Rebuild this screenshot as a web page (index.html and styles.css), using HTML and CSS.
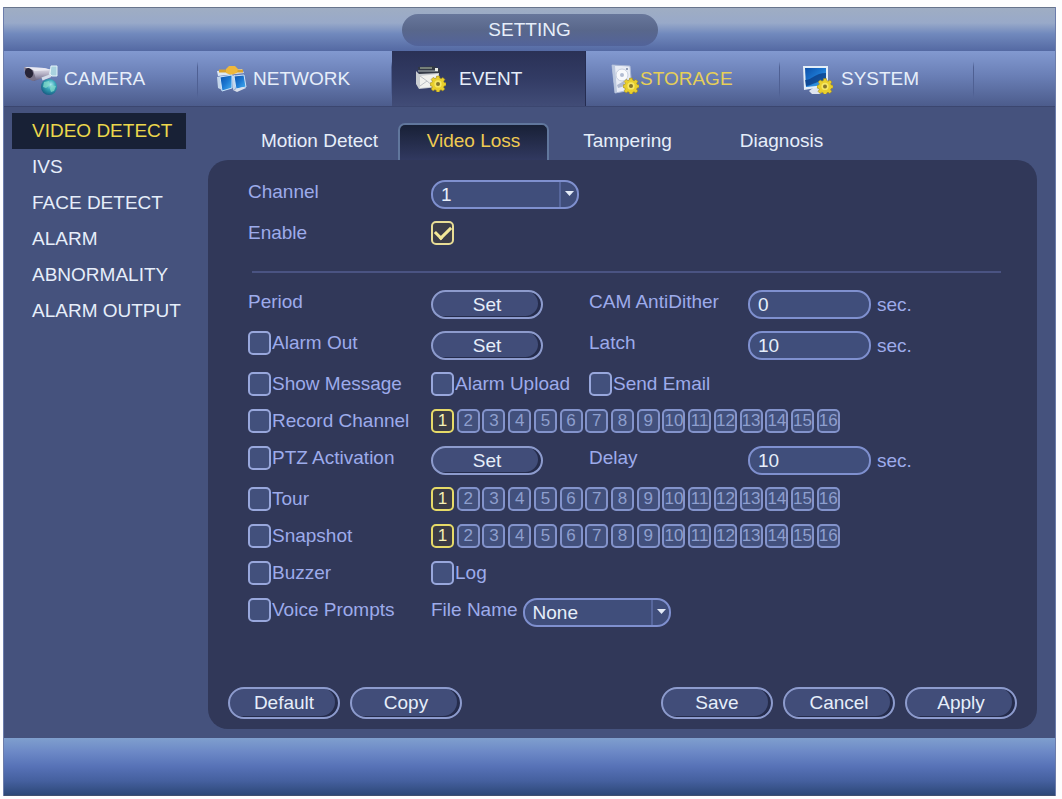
FILE: index.html
```html
<!DOCTYPE html>
<html lang="en">
<head>
<meta charset="utf-8">
<meta name="viewport" content="width=device-width, initial-scale=1">
<title>Setting - Event - Video Loss</title>
<link rel="stylesheet" href="styles.css">
</head>
<body>
<svg class="defs" width="0" height="0" aria-hidden="true">
  <defs>
    <linearGradient id="screen" x1="0" y1="0" x2="1" y2="1">
      <stop offset="0" stop-color="#0c4fa8"/><stop offset="0.5" stop-color="#1c78d2"/><stop offset="1" stop-color="#4bb4f2"/>
    </linearGradient>
    <linearGradient id="metal" x1="0" y1="0" x2="0" y2="1">
      <stop offset="0" stop-color="#efeff6"/><stop offset="0.5" stop-color="#b4b0c4"/><stop offset="1" stop-color="#625d7c"/>
    </linearGradient>
    <radialGradient id="globe" cx="0.6" cy="0.35" r="0.7">
      <stop offset="0" stop-color="#a9eaf0"/><stop offset="0.45" stop-color="#35a3b6"/><stop offset="1" stop-color="#145a80"/>
    </radialGradient>
    <symbol id="gear" viewBox="0 0 16 16">
      <path fill="#e9cf2d" stroke="#9b8420" stroke-width="0.6" d="M6.6 0.6h2.8l0.4 2 1.3 0.6 1.8-1.2 2 2-1.2 1.8 0.5 1.2 2 0.4v2.6l-2 0.5-0.6 1.2 1.2 1.8-2 2-1.8-1.2-1.2 0.6-0.4 1.8H6.6l-0.4-1.9-1.3-0.6-1.8 1.2-2-2 1.2-1.8-0.6-1.2-1.6-0.4V7.4l1.7-0.4 0.6-1.3-1.2-1.8 2-2 1.8 1.2 1.2-0.5z"/>
      <circle cx="8" cy="8.4" r="3.6" fill="#f7e865"/>
      <circle cx="8" cy="8.4" r="2" fill="#84752c"/>
    </symbol>
  </defs>
</svg>

<div class="app">
  <header class="titlebar"><h1 class="title">SETTING</h1></header>

  <nav class="mainnav" aria-label="Settings">
    <a class="navitem" href="#camera">
      <svg class="icon-camera" width="42" height="32" viewBox="0 0 42 32" aria-hidden="true">
        <path d="M2 4l20 1 8 2-3 6-15 5-8-3z" fill="url(#metal)"/>
        <path d="M2 4l20 1 8 2-17 1z" fill="#e9e9f2"/>
        <path d="M2 4l9 3 3 9-3 2-7-3z" fill="#797287"/>
        <ellipse cx="7" cy="10" rx="4" ry="5" transform="rotate(-20 7 10)" fill="#282538"/>
        <path d="M20 16l8-3 1-5h4" fill="none" stroke="#d3dce9" stroke-width="3"/>
        <path d="M29 3h6v10h-5l-2-2z" fill="#a9d2df" stroke="#e5f4f8"/>
        <circle cx="27" cy="24" r="8" fill="url(#globe)"/>
        <path d="M22 19l5-1 1 4-4 3-3-1zm7 3l5 1-2 5-3 1-1-3z" fill="#84dbc9" opacity="0.75"/>
      </svg>
      <span>CAMERA</span>
    </a>
    <a class="navitem" href="#network">
      <svg class="icon-network" width="37" height="32" viewBox="0 0 37 32" aria-hidden="true">
        <path d="M1 8l25-2 2 4-26 3z" fill="#dce8f5"/>
        <path d="M3 8h24" stroke="#d9a32e" stroke-width="3"/>
        <path d="M10 6l3-3h6l3 3-1 4-6 2-5-2z" fill="#efb83b"/>
        <path d="M1 14l5-1v14l-4-2zM16 13l3-1v14l-2 1z" fill="#c3d5ea"/>
        <path d="M4 14l12-2v13l-10 3z" fill="url(#screen)" stroke="#cce4fb"/>
        <path d="M18 13l10-1 2 12-10 2z" fill="url(#screen)" stroke="#cce4fb"/>
        <path d="M17 27l4 2 9-4-3-1z" fill="#d9dfea"/>
      </svg>
      <span>NETWORK</span>
    </a>
    <a class="navitem navitem-active" href="#event" aria-current="page">
      <svg class="icon-event" width="49" height="32" viewBox="0 0 49 32" aria-hidden="true">
        <path d="M8 4l16-1 6 3v5H9z" fill="#343a46"/>
        <path d="M10 5h12" stroke="#768078" stroke-width="2"/>
        <path d="M8 8h20" stroke="#aeb8b8" stroke-width="1"/>
        <path d="M6 8l3 3 20-1v14l-20 2-3-5z" fill="#c9cdd1"/>
        <path d="M10 13l18-2v12l-18 2z" fill="#f1f2ee"/>
        <path d="M10 13l7 5-7 5M17 18l7 6" fill="none" stroke="#bcc0c5"/>
        <rect x="25" y="5" width="3" height="3" fill="#e8ece9"/>
        <use href="#gear" x="20" y="12" width="16" height="17"/>
      </svg>
      <span>EVENT</span>
    </a>
    <a class="navitem navitem-hover" href="#storage">
      <svg class="icon-storage" width="36" height="32" viewBox="0 0 36 32" aria-hidden="true">
        <path d="M8 2l18 1 2 24-17 3z" fill="#e8ecf5" stroke="#aab7d4"/>
        <path d="M8 2l3 28 2-1L11 3z" fill="#bcc8de"/>
        <circle cx="18" cy="12" r="6" fill="#f8f9fc" stroke="#c6cede"/>
        <circle cx="18" cy="12" r="2" fill="#b2bcd2"/>
        <path d="M13 22l7-4 1 5-7 2z" fill="#aeb8cf"/>
        <circle cx="23" cy="6" r="1" fill="#7583a3"/>
        <use href="#gear" x="19" y="14" width="16" height="17"/>
      </svg>
      <span>STORAGE</span>
    </a>
    <a class="navitem" href="#system">
      <svg class="icon-system" width="43" height="32" viewBox="0 0 43 32" aria-hidden="true">
        <path d="M11 28l4-3h9l2 4-5 2h-7z" fill="#dee4ee"/>
        <path d="M5 3h25v20l-24 4z" fill="#e4eef8"/>
        <path d="M7 5h21v17L8 24z" fill="url(#screen)"/>
        <path d="M7 17c7 0 10-7 21-7v8c-8-1-12 4-20 5z" fill="#0b3b83" opacity="0.75"/>
        <use href="#gear" x="19" y="15" width="16" height="16"/>
      </svg>
      <span>SYSTEM</span>
    </a>
  </nav>

  <div class="body">
    <nav class="sidebar" aria-label="Event">
      <a class="sideitem sideitem-active" href="#video-detect" aria-current="page">VIDEO DETECT</a>
      <a class="sideitem" href="#ivs">IVS</a>
      <a class="sideitem" href="#face-detect">FACE DETECT</a>
      <a class="sideitem" href="#alarm">ALARM</a>
      <a class="sideitem" href="#abnormality">ABNORMALITY</a>
      <a class="sideitem" href="#alarm-output">ALARM OUTPUT</a>
    </nav>

    <main class="content">
      <nav class="tabs" aria-label="Video detect">
        <a class="tab" href="#motion">Motion Detect</a>
        <a class="tab tab-active" href="#loss" aria-current="page">Video Loss</a>
        <a class="tab" href="#tampering">Tampering</a>
        <a class="tab" href="#diagnosis">Diagnosis</a>
      </nav>

      <form class="panel">
        <div class="fields">
          <div class="row">
            <label class="label" for="channel">Channel</label>
            <span class="dropdown">
              <select id="channel" class="field"><option>1</option><option>2</option></select>
              <svg class="arrow" width="20" height="29" viewBox="0 0 20 29" aria-hidden="true"><path d="M1 2v25" stroke="#6e80c0"/><path d="M6 11h9l-4.5 5z" fill="#e4ebf7"/></svg>
            </span>
          </div>
          <div class="row">
            <label class="label" for="enable">Enable</label>
            <input id="enable" class="box" type="checkbox" checked>
          </div>
        </div>

        <hr class="divider">

        <div class="fields">
          <div class="row">
            <span class="label">Period</span>
            <button class="pill set" type="button" aria-label="Set period">Set</button>
            <label class="label" for="antidither">CAM AntiDither</label>
            <span class="unit"><input id="antidither" class="field" type="text" value="0"> sec.</span>
          </div>
          <div class="row">
            <label class="check"><input class="box" type="checkbox">Alarm Out</label>
            <button class="pill set" type="button" aria-label="Set alarm out">Set</button>
            <label class="label" for="latch">Latch</label>
            <span class="unit"><input id="latch" class="field" type="text" value="10"> sec.</span>
          </div>
          <div class="row">
            <label class="check"><input class="box" type="checkbox">Show Message</label>
            <label class="check"><input class="box" type="checkbox">Alarm Upload</label>
            <label class="check"><input class="box" type="checkbox">Send Email</label>
          </div>
          <div class="row">
            <label class="check"><input class="box" type="checkbox">Record Channel</label>
            <div class="channels" role="group" aria-label="Record channels">
              <button class="ch ch-on" type="button" aria-pressed="true">1</button><button class="ch" type="button">2</button><button class="ch" type="button">3</button><button class="ch" type="button">4</button><button class="ch" type="button">5</button><button class="ch" type="button">6</button><button class="ch" type="button">7</button><button class="ch" type="button">8</button><button class="ch" type="button">9</button><button class="ch" type="button">10</button><button class="ch" type="button">11</button><button class="ch" type="button">12</button><button class="ch" type="button">13</button><button class="ch" type="button">14</button><button class="ch" type="button">15</button><button class="ch" type="button">16</button>
            </div>
          </div>
          <div class="row">
            <label class="check"><input class="box" type="checkbox">PTZ Activation</label>
            <button class="pill set" type="button" aria-label="Set PTZ activation">Set</button>
            <label class="label" for="delay">Delay</label>
            <span class="unit"><input id="delay" class="field" type="text" value="10"> sec.</span>
          </div>
          <div class="row">
            <label class="check"><input class="box" type="checkbox">Tour</label>
            <div class="channels" role="group" aria-label="Tour channels">
              <button class="ch ch-on" type="button" aria-pressed="true">1</button><button class="ch" type="button">2</button><button class="ch" type="button">3</button><button class="ch" type="button">4</button><button class="ch" type="button">5</button><button class="ch" type="button">6</button><button class="ch" type="button">7</button><button class="ch" type="button">8</button><button class="ch" type="button">9</button><button class="ch" type="button">10</button><button class="ch" type="button">11</button><button class="ch" type="button">12</button><button class="ch" type="button">13</button><button class="ch" type="button">14</button><button class="ch" type="button">15</button><button class="ch" type="button">16</button>
            </div>
          </div>
          <div class="row">
            <label class="check"><input class="box" type="checkbox">Snapshot</label>
            <div class="channels" role="group" aria-label="Snapshot channels">
              <button class="ch ch-on" type="button" aria-pressed="true">1</button><button class="ch" type="button">2</button><button class="ch" type="button">3</button><button class="ch" type="button">4</button><button class="ch" type="button">5</button><button class="ch" type="button">6</button><button class="ch" type="button">7</button><button class="ch" type="button">8</button><button class="ch" type="button">9</button><button class="ch" type="button">10</button><button class="ch" type="button">11</button><button class="ch" type="button">12</button><button class="ch" type="button">13</button><button class="ch" type="button">14</button><button class="ch" type="button">15</button><button class="ch" type="button">16</button>
            </div>
          </div>
          <div class="row">
            <label class="check"><input class="box" type="checkbox">Buzzer</label>
            <label class="check"><input class="box" type="checkbox">Log</label>
          </div>
          <div class="row">
            <label class="check"><input class="box" type="checkbox">Voice Prompts</label>
            <div class="file">
              <label class="label" for="file">File Name</label>
              <span class="dropdown">
                <select id="file" class="field"><option>None</option></select>
                <svg class="arrow" width="20" height="29" viewBox="0 0 20 29" aria-hidden="true"><path d="M1 2v25" stroke="#6e80c0"/><path d="M6 11h9l-4.5 5z" fill="#e4ebf7"/></svg>
              </span>
            </div>
          </div>
        </div>

        <div class="actions">
          <button class="pill action" type="button">Default</button>
          <button class="pill action" type="button">Copy</button>
          <span class="spacer"></span>
          <button class="pill action" type="submit">Save</button>
          <button class="pill action" type="button">Cancel</button>
          <button class="pill action" type="button">Apply</button>
        </div>
      </form>
    </main>
  </div>

  <footer class="footer"></footer>
</div>
</body>
</html>
```

FILE: styles.css
```css
* {
  box-sizing: border-box;
}

body {
  margin: 0;
  min-height: 100vh;
  display: flex;
  padding: 7px 6px 3px 3px;
  background: #fdfdfe;
  color: #e6eefa;
  font: 19px/24px "Liberation Sans", Arial, sans-serif;
}

a {
  color: inherit;
  text-decoration: none;
}

button,
input,
select {
  margin: 0;
  font: inherit;
  color: inherit;
}

.defs {
  position: absolute;
}

.app {
  flex: 1;
  display: flex;
  flex-direction: column;
  background: #45527d;
  border-left: 1px solid #6b7cab;
  border-right: 1px solid #6b7cab;
}

/* Title bar */
.titlebar {
  display: flex;
  justify-content: center;
  align-items: center;
  height: 44px;
  border-top: 1px solid #67748c;
  background: linear-gradient(#9fadc3, #98a9c9 35%, #7189bd 60%, #5469a3);
}

.title {
  width: 256px;
  margin: 0;
  border-radius: 16px;
  background: linear-gradient(#68779b, #59678b 50%, #52639a);
  font-size: 19px;
  font-weight: normal;
  line-height: 32px;
  text-align: center;
}

/* Main navigation */
.mainnav {
  display: flex;
  height: 56px;
  border-bottom: 1px solid #3b466f;
  background: linear-gradient(#8299d0, #6a7fb6 45%, #4c5c8c);
}

.navitem {
  flex: 0 1 194px;
  display: flex;
  align-items: center;
  padding-left: 18px;
  border-right: 1px solid #5b6d9f;
  border-image: linear-gradient(transparent 20%, #4f6093 30%, #4f6093 75%, transparent 85%) 1;
}

.navitem-active {
  border-image: none;
  border-color: #252c50;
  background: linear-gradient(#2a3156, #323b64 50%, #414c77);
}

.navitem-hover {
  color: #e6cf58;
}

/* Body */
.body {
  flex: 1;
  display: flex;
}

.sidebar {
  width: 204px;
  padding: 6px 22px 0 8px;
}

.sideitem {
  display: block;
  padding-left: 20px;
  line-height: 36px;
  white-space: nowrap;
}

.sideitem-active {
  background: #182136;
  color: #ecd84c;
}

.content {
  flex: 1;
  display: flex;
  flex-direction: column;
  padding: 16px 18px 9px 0;
}

.tabs {
  display: flex;
  gap: 3px;
  padding-left: 36px;
}

.tab {
  width: 151px;
  height: 37px;
  line-height: 36px;
  text-align: center;
}

.tab-active {
  border: 2px solid #61779d;
  border-bottom: 0;
  border-radius: 7px 7px 0 0;
  background: linear-gradient(#182036, #313960);
  color: #f0cb52;
  line-height: 32px;
}

.panel {
  flex: 1;
  display: flex;
  flex-direction: column;
  padding: 20px 20px 10px;
  border-radius: 20px;
  background: #313859;
}

/* Form rows */
.fields {
  display: grid;
  gap: 12px;
  padding-left: 20px;
}

.row {
  display: grid;
  grid-template-columns: 183px 158px 159px 1fr;
  align-items: start;
  min-height: 25px;
  white-space: nowrap;
}

.label,
.check {
  color: #9dabeb;
}

.check {
  display: flex;
  align-items: center;
  gap: 1px;
}

.divider {
  height: 2px;
  margin: 25px 16px 17px 24px;
  border: 0;
  background: #4a5382;
}

.box {
  appearance: none;
  flex: none;
  display: grid;
  place-items: center;
  width: 23px;
  height: 24px;
  border: 2px solid #98a7dc;
  border-radius: 5px;
  background: #42507c;
}

.box:checked {
  border-color: #e8dd96;
  background: #3c3d49;
}

.box:checked::after {
  content: "";
  width: 7px;
  height: 13px;
  margin-bottom: 4px;
  border: solid #f4e998;
  border-width: 0 3px 3px 0;
  rotate: 45deg;
}

.field {
  width: 123px;
  height: 29px;
  padding: 0 8px;
  border: 2px solid #7f90cf;
  border-radius: 14px;
  background: #404e7b;
}

.dropdown {
  display: grid;
  width: 148px;
}

.dropdown .field {
  appearance: none;
  grid-area: 1 / 1;
  width: 148px;
}

.arrow {
  grid-area: 1 / 1;
  justify-self: end;
  pointer-events: none;
}

.unit {
  display: flex;
  align-items: center;
  gap: 6px;
  color: #9dabeb;
}

.unit .field {
  color: #e6eefa;
}

.pill {
  width: 112px;
  padding: 0;
  border: 2px solid #8d9bcd;
  border-radius: 16px;
  background: #414d79;
  box-shadow: inset -3px -1px 0 #252c4c;
  text-align: center;
}

.set {
  height: 29px;
}

.channels {
  grid-column: 2 / -1;
  display: flex;
  justify-content: space-between;
  width: 409px;
}

.ch {
  display: flex;
  justify-content: center;
  align-items: center;
  width: 23px;
  height: 24px;
  padding: 0;
  border: 2px solid #8393cb;
  border-radius: 5px;
  background: #42507c;
  color: #8e9fce;
  font-size: 17px;
}

.ch-on {
  border-color: #e6da68;
  background: #3b3b45;
  color: #f6f1b4;
}

.file {
  grid-column: 2 / -1;
  display: flex;
  gap: 5px;
}

.actions {
  display: flex;
  gap: 10px;
  margin-top: auto;
}

.action {
  height: 32px;
}

.spacer {
  flex: 1;
}

.footer {
  height: 58px;
  border-bottom: 1px solid #40506f;
  background: linear-gradient(#7f9fce, #6c88c6 25%, #5772b7 50%, #45609f 75%, #2d4878);
}
```
